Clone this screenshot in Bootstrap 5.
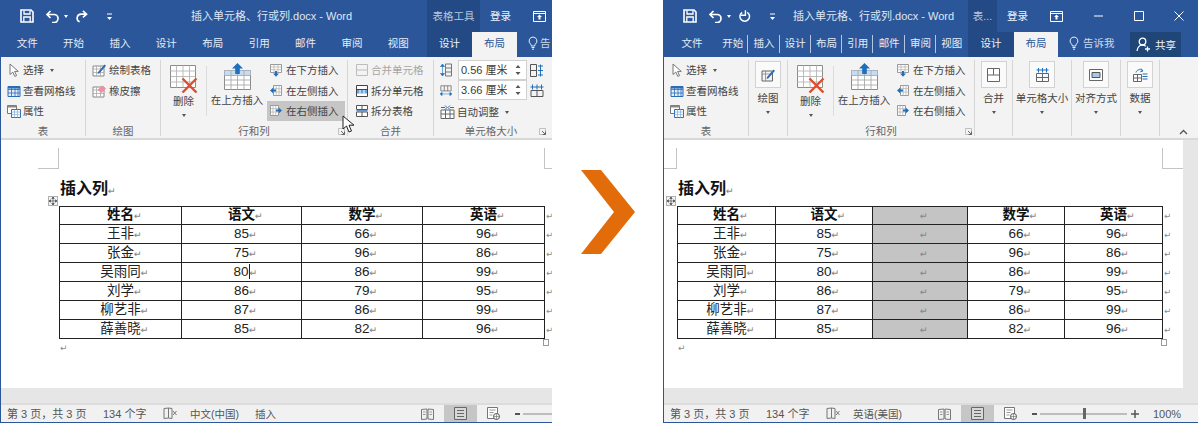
<!DOCTYPE html>
<html lang="zh-CN">
<head>
  <meta charset="UTF-8">
  <title>插入列</title>
  <meta name="viewport" content="width=device-width, initial-scale=1">
  <link href="https://cdn.jsdelivr.net/npm/bootstrap@5.3.0/dist/css/bootstrap.min.css" rel="stylesheet">
  <style>
    html, body { height: 423px; overflow: hidden; background: #fff; }
    body {
      font-family: "Liberation Sans", "Noto Sans CJK SC", sans-serif;
      font-size: 10.5px;
      line-height: 14px;
      color: #444;
    }
    svg { display: block; flex-shrink: 0; }

    /* windows */
    .wnd {
      height: 423px;
      overflow: hidden;
      flex-shrink: 0;
      display: flex;
      flex-direction: column;
      position: relative;
      border-left: 1px solid #2b579a;
      border-bottom: 1px solid #2b579a;
    }
    .wnd-a { width: 552px; }
    .wnd-b { width: 535px; }
    .arrow-gap { width: 111px; flex-shrink: 0; }

    /* title row */
    .titlebar { height: 32px; background: #2b579a; color: #dfe7f3; flex-shrink: 0; white-space: nowrap; }
    .qat { width: 117px; flex-shrink: 0; }
    .ms-qs { margin-left: 19px; }
    .ms-qu { margin-left: 11px; }
    .caret-q { width: 0; height: 0; margin-left: 4px; border: 2.5px solid transparent; border-top: 3px solid #fff; border-bottom: 0; }
    .ms-qr { margin-left: 7px; }
    .ms-qm { margin-left: 18px; }
    .doc-title { width: 165px; flex-shrink: 0; font-size: 11px; }
    .wnd-a .doc-title { margin-left: 73px; }
    .wnd-b .doc-title { margin-left: 12px; }
    .ctx-head { height: 32px; background: #234a84; color: #b9c8de; flex-shrink: 0; text-align: center; line-height: 32px; }
    .wnd-a .ctx-head { width: 53px; margin-left: 71px; }
    .wnd-b .ctx-head { width: 29px; margin-left: 10px; }
    .login { margin-left: 10px; width: 21px; color: #f2f5fa; }
    .disp-ico { margin-left: 22px; }
    .win-min { margin-left: 31px; }
    .win-max { margin-left: 31px; }
    .win-x { margin-left: 30px; }

    /* tab row */
    .tabrow { height: 25px; background: #2b579a; color: #e6ecf5; flex-shrink: 0; white-space: nowrap; padding-left: 3px; }
    .tab-item { text-align: center; line-height: 22px; height: 25px; flex-shrink: 0; }
    .wnd-a .tab-item { width: 46.4px; }
    .wnd-b .tab-item { width: 31.3px; position: relative; }
    .wnd-b .tab-item.first { width: 50px; }
    .wnd-b .tab-item.sep::after { content: ""; position: absolute; right: 0; top: 3px; height: 18px; border-right: 1px solid #b5c6df; }
    .wnd-a .tab-ctx { width: 45px; margin-left: 5.6px; }
    .wnd-b .tab-ctx { width: 46px; margin-left: .6px; }
    .tab-item.tab-ctx { background: #234a84; color: #f2f5fa; }
    .tab-item.tab-on { background: #f3f3f3; color: #2b579a; }
    .wnd-a .tab-on { width: 45px; }
    .wnd-b .tab-on { width: 44px; }
    .tell { color: #cdd9ea; gap: 2px; }
    .wnd-a .tell { margin-left: 11px; }
    .wnd-b .tell { margin-left: 11px; gap: 4px; }
    .share {
      height: 25px; width: 51px; margin-left: 16px; background: #1f4677; color: #f2f5fa;
      flex-shrink: 0;
    }

    /* ribbon */
    .rib { height: 83px; background: #f3f3f3; border-bottom: 2px solid #d8d8d8; flex-shrink: 0; }
    .grp { flex-shrink: 0; height: 76px; margin-top: 3px; border-right: 1px solid #d6d6d6; position: relative; display: flex; flex-direction: column; }
    .grp-body { flex: 1 1 auto; display: flex; min-height: 0; }
    .grp-name { height: 15px; line-height: 15px; margin-bottom: -3px; text-align: center; color: #666; flex-shrink: 0; }
    .launch { position: absolute; right: 2px; bottom: 1px; }
    .g-tbl { width: 85px; }
    .g-draw { width: 75px; }
    .g-rows { width: 187px; }
    .g-merge { width: 86px; }
    .g-size { width: 114px; border-right: 0; }
    .g-draw-s { width: 39px; }
    .g-merge-s { width: 38px; }
    .g-size-s { width: 59px; }
    .g-align-s { width: 49px; }
    .g-data-s { width: 39px; }
    .collapse-up { position: absolute; right: 10px; bottom: 3px; }

    .cmd { display: flex; align-items: center; height: 20.4px; white-space: nowrap; }
    .g-tbl .cmd { padding-left: 6px; gap: 2px; }
    .g-draw .cmd { padding-left: 6px; gap: 2px; }
    .g-merge .cmd { padding-left: 8px; gap: 3px; }
    .g-rows .cmd { width: 78px; padding-left: 3px; gap: 4px; }
    .cmd.hot { background: #c6c6c6; }
    .cmd.off { color: #a6a6a6; }
    .caret-s { width: 0; height: 0; border: 2.5px solid transparent; border-top: 3px solid #555; border-bottom: 0; display: inline-block; flex-shrink: 0; }
    .cmd .caret-s { margin-left: 4px; }

    .big { display: flex; flex-direction: column; align-items: center; flex-shrink: 0; white-space: nowrap; }
    .big .lbl { line-height: 14px; margin-top: 1px; }
    .big .caret-s { margin-top: 6px; }
    .big-del { width: 45px; padding-top: 5px; }
    .big-ins { width: 60px; padding-top: 3px; }
    .big-ins .lbl { margin-top: 3px; }
    .rule-v { width: 1px; height: 50px; margin-top: 6px; background: #dcdcdc; flex-shrink: 0; }

    .box-cmd { display: flex; flex-direction: column; align-items: center; width: 100%; white-space: nowrap; }
    .ico-box {
      width: 26px; height: 27px; margin-top: 1px; background: #fafafa; border: 1px solid #d2d2d2;
      display: flex; align-items: center; justify-content: center;
    }
    .box-cmd .lbl { margin-top: 3px; }
    .box-cmd .caret-s { margin-top: 6px; }

    .size-row { height: 20px; display: flex; align-items: center; padding-left: 6px; }
    .size-row.auto { margin-top: 2px; gap: 2px; }
    .spin {
      width: 69px; height: 20px; margin-left: 6px; margin-right: 3px; background: #fff; border: 1px solid #d0d0d0;
      padding-left: 2px; display: flex; align-items: center; justify-content: space-between; flex-shrink: 0;
      color: #3a3a3a; font-size: 11px;
    }
    .spin-arrows { margin-right: 5px; }

    /* document */
    .doc-area { flex: 1 1 auto; display: flex; min-height: 0; background: #e6e6e6; }
    .doc-view { flex: 1 1 auto; display: flex; flex-direction: column; min-width: 0; }
    .doc-paper { height: 248px; background: #fff; overflow: hidden; }
    .wnd-b .doc-paper { width: 519px; }
    .sheet { width: 485px; color: #222; }
    .wnd-a .sheet { margin-left: 58px; }
    .wnd-b .sheet { margin-left: 13px; }
    .marks { display: flex; justify-content: space-between; margin: 8px -21px 0; height: 21px; }
    .mk { width: 21px; height: 21px; border-bottom: 1px solid #c4c4c4; }
    .mk-l { border-right: 1px solid #c4c4c4; }
    .mk-r { border-left: 1px solid #c4c4c4; }
    .doc-h { font-size: 16px; font-weight: 700; line-height: 20px; margin-top: 10px; padding-left: 1px; color: #111; }
    .tbl-wrap { position: relative; margin-top: 5px; }
    .mv-handle { position: absolute; left: -11px; top: -10px; width: 10px; height: 10px; border: 1px solid #b0b0b0; background: #f4f4f4; display: flex; align-items: center; justify-content: center; }
    .end-handle { position: absolute; left: 484px; top: 133px; width: 6px; height: 7px; border: 1px solid #9a9a9a; background: #fff; }
    .table.doc-table { width: 495px; table-layout: fixed; margin: 0; border-collapse: collapse; font-size: 13.5px; line-height: 16px; }
    .table.doc-table tr { height: 19px; border-width: 0; }
    .table.doc-table tr.head { height: 18px; }
    .table.doc-table td {
      padding: 0; text-align: center; vertical-align: middle; white-space: nowrap;
      border: 1px solid #222; background: transparent; color: #222;
    }
    .table.doc-table td.row-end { border-width: 0; text-align: left; padding-left: 1px; }
    .table.doc-table td.col-sel { background: #c4c4c4; }
    .table.doc-table tr.head td { font-weight: 700; color: #111; }
    .pm { display: inline-block; width: 0; font-family: "DejaVu Sans", sans-serif; font-size: 9.5px; font-weight: 400; color: #888; vertical-align: baseline; }
    .row-end .pm { width: auto; font-size: 8.5px; }
    .text-caret { display: inline-block; width: 0; height: 15px; border-left: 1px solid #222; vertical-align: -3px; }
    .tail-pm { font-family: "DejaVu Sans", sans-serif; font-size: 9px; color: #8a8a8a; line-height: 12px; margin-top: 3px; padding-left: 1px; }
    .doc-gray { flex: 1 1 auto; }
    .side-gray { width: 15px; }

    /* status */
    .stat { height: 19px; background: #f1f1f1; border-top: 2px solid #dcdcdc; flex-shrink: 0; white-space: nowrap; color: #555; }
    .stat-left { flex-shrink: 0; }
    .wnd-a .stat-left { width: 420px; }
    .wnd-b .stat-left { width: 274px; }
    .s1 { width: 102px; padding-left: 6px; flex-shrink: 0; font-size: 11px; }
    .s2 { width: 60px; flex-shrink: 0; font-size: 11px; }
    .s3 { width: 27px; flex-shrink: 0; }
    .s4 { width: 65px; flex-shrink: 0; }
    .view-hot { width: 33px; height: 17px; margin: 0 10px 0 10px; background: #c6c6c6; display: flex; align-items: center; justify-content: center; flex-shrink: 0; }
    .zoom-minus { margin-left: 15px; width: 5px; height: 2px; background: #555; flex-shrink: 0; }
    .zoom-track { width: 87px; height: 2px; margin-left: 3px; background: #bdbdbd; position: relative; flex-shrink: 0; }
    .zoom-thumb { position: absolute; left: 43px; top: -5px; width: 3px; height: 11px; background: #666; }
    .zoom-plus { margin-left: 4px; }
    .zoom-pct { margin-left: 14px; font-size: 11px; }
    .pointer { position: absolute; left: 340px; top: 115px; }
  </style>
</head>
<body>
  <svg width="0" height="0" class="position-absolute">
    <symbol id="i-save" viewBox="0 0 14 14"><path d="M1 1h10l2 2v10H1z" fill="none" stroke="#fff" stroke-width="1.6"/><path d="M4 1.500v3.500h6V1.500M3.800 13V8h6.400v5" fill="none" stroke="#fff" stroke-width="1.300"/></symbol>
    <symbol id="i-undo" viewBox="0 0 15 14"><path d="M5.500 2 2 5.500 5.500 9M2.500 5.500H9a4 4 0 0 1 0 8H7" fill="none" stroke="#fff" stroke-width="1.700"/></symbol>
    <symbol id="i-redo" viewBox="0 0 14 14"><path d="M8.500 1.500 12.500 5l-4 3.500M12 5H6.500a4.300 4.300 0 0 0-1.500 8.300" fill="none" stroke="#fff" stroke-width="1.700"/></symbol>
    <symbol id="i-repeat" viewBox="0 0 14 14"><path d="M4.500 3a5.200 5.200 0 1 0 5.500 0" fill="none" stroke="#fff" stroke-width="1.600"/><path d="M8 .8v5.400H3" fill="none" stroke="#fff" stroke-width="1.500"/></symbol>
    <symbol id="i-qat" viewBox="0 0 7 9"><path d="M1 2h5" stroke="#fff"/><path d="M1 5h5L3.500 8z" fill="#fff"/></symbol>
    <symbol id="i-disp" viewBox="0 0 13 11"><path d="M.5.500h12v10H.5z" fill="none" stroke="#fff"/><path d="M.5 2.500h12" stroke="#fff"/><path d="M6.500 3.500 9 6H7.500v2.500h-2V6H4z" fill="#fff"/></symbol>
    <symbol id="i-bulb" viewBox="0 0 10 14"><path d="M5 1a4 4 0 0 0-2.300 7.200c.5.500.6 1 .6 1.800h3.400c0-.8.100-1.300.6-1.800A4 4 0 0 0 5 1zM3.500 11.500h3M4 13.200h2" fill="none" stroke="#e8edf5"/></symbol>
    <symbol id="i-user" viewBox="0 0 15 15"><circle cx="6.500" cy="4.500" r="3.300" fill="none" stroke="#fff" stroke-width="1.300"/><path d="M1 14c.4-3.500 2.700-6 5.500-6 1.300 0 2.300.4 3.200 1.200M11.500 9.500v5M9 12h5" fill="none" stroke="#fff" stroke-width="1.300"/></symbol>
    <symbol id="i-cursor" viewBox="0 0 12 14"><path d="M2 1v10.500l2.800-2.400 2 4.300 1.800-.8-2-4.200h3.700z" fill="#fff" stroke="#777"/></symbol>
    <symbol id="i-grid" viewBox="0 0 14 14"><path d="M1 2.500h12v10H1z" fill="#e3eef9" stroke="#2b6cb5"/><path d="M1 5.500h12M1 9h12M4.500 2.500v10M8 2.500v10M11 2.500v10" stroke="#2b6cb5" stroke-width=".8" fill="none"/><path d="M1 2.500h12v2H1z" fill="#2b6cb5"/></symbol>
    <symbol id="i-props" viewBox="0 0 14 14"><path d="M.5 1.500h9v8h-9z" fill="#fff" stroke="#777"/><path d="M.5 1.500h9v2h-9z" fill="#888"/><path d="M4.500 5.500h9v8h-9z" fill="#fff" stroke="#2b6cb5"/><path d="M4.500 8h9M4.500 10.700h9M7.500 5.500v8M10.500 5.500v8" stroke="#8fb4dc" stroke-width=".8"/></symbol>
    <symbol id="i-drawtbl" viewBox="0 0 15 14"><path d="M1 3h11v10H1z" fill="#fff" stroke="#888"/><path d="M1 6h11M1 9.500h11M4.500 3v10M8.500 3v10" stroke="#aaa" stroke-width=".8"/><path d="M6 9 12.500 1.500l1.500 1.300-6.500 7.400L5.500 11z" fill="#2b6cb5"/></symbol>
    <symbol id="i-eraser" viewBox="0 0 15 14"><path d="M1 3h11v10H1z" fill="#fff" stroke="#888"/><path d="M1 6h11M1 9.500h11M4.500 3v10M8.500 3v10" stroke="#aaa" stroke-width=".8"/><path d="M5.500 6 10 1.500l4 3L9.500 9z" fill="#ee8fa3"/></symbol>
    <symbol id="i-del" viewBox="0 0 28 28"><path d="M.5.500h25v22H.5z" fill="#fff" stroke="#8c8c8c"/><path d="M.5 6h25M.5 11.500h25M.5 17h25M6.500.5v22M13 .5v22M19.500.5v22" stroke="#b5b5b5" stroke-width=".9" fill="none"/><path d="m12.500 13.500 14 14M26.500 13.500l-14 14" stroke="#dd4f2c" stroke-width="2.400"/></symbol>
    <symbol id="i-insabove" viewBox="0 0 27 27"><path d="M.5 7.500h26v19H.5z" fill="#fff" stroke="#8c8c8c"/><path d="M.5 7.500h26v5H.5z" fill="#c7dcf0"/><path d="M.5 12.500h26M.5 17h26M.5 22h26M7 7.500v19M13.500 7.500v19M20 7.500v19" stroke="#aaa" stroke-width=".9" fill="none"/><path d="M13.500 0 19 5.500h-3.200V11h-4.600V5.500H8z" fill="#1f6fbc"/></symbol>
    <symbol id="i-insbelow" viewBox="0 0 12 13"><path d="M.5.500h11v8H.5z" fill="#fff" stroke="#999"/><path d="M.5 3h11M.5 5.700h11M4 .5v8M8 .5v8" stroke="#b5b5b5" stroke-width=".8"/><path d="M6 12.800 9 9.500H7V7H5v2.500H3z" fill="#1f6fbc"/></symbol>
    <symbol id="i-insleft" viewBox="0 0 12 13"><path d="M3.500 1.500h8v10h-8z" fill="#fff" stroke="#999"/><path d="M3.500 4.700h8M3.500 8h8M6.200 1.500v10M9 1.500v10" stroke="#b5b5b5" stroke-width=".8"/><path d="M0 6.500 3.300 3.500v2H6v2H3.300v2z" fill="#1f6fbc"/></symbol>
    <symbol id="i-insright" viewBox="0 0 12 13"><path d="M.5 1.500h8v10h-8z" fill="#fff" stroke="#999"/><path d="M.5 4.700h8M.5 8h8M3 1.500v10M5.800 1.500v10" stroke="#b5b5b5" stroke-width=".8"/><path d="M12 6.500 8.700 3.500v2H6v2h2.700v2z" fill="#1f6fbc"/></symbol>
    <symbol id="i-merge" viewBox="0 0 12 12"><path d="M.5.500h11v11H.5zM.5 6h11" fill="none" stroke="#bdbdbd"/></symbol>
    <symbol id="i-splitcell" viewBox="0 0 12 12"><path d="M.5.500h11v11H.5z" fill="#fff" stroke="#444"/><path d="M.5 4.500h11" stroke="#444"/><path d="M1 5h10v3.500H1z" fill="#6ba3d8"/><path d="M4 5v3.500M8 5v3.500" stroke="#fff"/></symbol>
    <symbol id="i-splittbl" viewBox="0 0 12 12"><path d="M.5.500h11v4H.5zM.5 7h11v4.500H.5zM6 .5v4M6 7v4.500" fill="#fff" stroke="#555"/><path d="M.5 5.800h11" stroke="#2b6cb5"/></symbol>
    <symbol id="i-rowh" viewBox="0 0 12 14"><path d="M5.500 1h6v12h-6zM5.500 5h6M5.500 9h6" fill="none" stroke="#777"/><path d="M2.500 1 4.500 3.500h-4zM2.500 13 .5 10.500h4zM2.500 3v8" fill="#1f6fbc" stroke="#1f6fbc" stroke-width=".6"/></symbol>
    <symbol id="i-colw" viewBox="0 0 14 13"><path d="M1 1h12v6H1zM5 1v6M9 1v6" fill="none" stroke="#777"/><path d="M0 10.500 2.500 8.500v4zM14 10.500l-2.500-2v4zM2 10.500h10" fill="#1f6fbc" stroke="#1f6fbc" stroke-width=".6"/></symbol>
    <symbol id="i-distr" viewBox="0 0 14 13"><path d="M.5.500h6v12h-6zM.5 6.500h6" fill="none" stroke="#555"/><path d="M10.500.5v12M8 2h5M8 6.500h5M8 11h5" fill="none" stroke="#1f6fbc"/></symbol>
    <symbol id="i-distc" viewBox="0 0 14 13"><path d="M1 6.500h12v6H1zM7 6.500v6" fill="none" stroke="#555"/><path d="M.5 3h13M2.500.5v5M7 .5v5M11.500.5v5" fill="none" stroke="#1f6fbc"/></symbol>
    <symbol id="i-auto" viewBox="0 0 15 14"><path d="M1 5h13v8.500H1zM1 9h13M5.500 5v8.500M10 5v8.500" fill="#fff" stroke="#666"/><path d="M1 2.500h4M10 2.500h4M5 .5 7 2.500 5 4.500M10 .5 8 2.500l2 2" fill="none" stroke="#1f6fbc"/></symbol>
    <symbol id="i-drawgrp" viewBox="0 0 15 14"><path d="M1 3h10.500v10H1z" fill="#f3f3f3" stroke="#666"/><path d="M1 6h10.500M4.500 3v10" stroke="#888" stroke-width=".8"/><path d="M6 9 12.500 1.500l1.500 1.300-6.500 7.400L5.500 11z" fill="#2b6cb5"/></symbol>
    <symbol id="i-mergebig" viewBox="0 0 13 14"><path d="M.5.500h12v13H.5zM.5 7h12M6.500.5V7" fill="#fff" stroke="#666"/></symbol>
    <symbol id="i-sizebig" viewBox="0 0 13 14"><path d="M.5 5.500h12v8H.5zM6.500 5.500v8M.5 9.500h12" fill="none" stroke="#666"/><path d="M.5 2h12M2.500 0v4.500M6.500 0v4.500M10.500 0v4.500" fill="none" stroke="#1f6fbc"/></symbol>
    <symbol id="i-alignbig" viewBox="0 0 14 12"><path d="M.5.500h13v11H.5z" fill="#fff" stroke="#666"/><path d="M3 3.500h8v5H3z" fill="#a9c7e6" stroke="#555"/></symbol>
    <symbol id="i-databig" viewBox="0 0 15 14"><path d="M.5 6.500h8v7h-8zM.5 10h8M4.500 6.500v7" fill="#fff" stroke="#666"/><path d="M9.500 6h5M9.500 8.500h5M9.500 11h5" stroke="#2b6cb5"/><path d="M3 4.500C3.500 2 7 .5 9.500 2.500M8 .5 10 3 7.300 3.800" fill="none" stroke="#1f6fbc"/></symbol>
    <symbol id="i-launch" viewBox="0 0 7 7"><path d="M.5 .5h6v6h-6z" fill="none" stroke="#aaa" stroke-width=".7"/><path d="M3 3l3.500 3.500M6.500 3.500v3h-3" fill="none" stroke="#666"/></symbol>
    <symbol id="i-spin" viewBox="0 0 6 12"><path d="M3 1 5.500 4h-5zM3 11 .5 8h5z" fill="#555"/></symbol>
    <symbol id="i-move" viewBox="0 0 8 8"><path d="M4 0v8M0 4h8M4 0 2.800 1.500h2.400zM4 8 2.800 6.500h2.400zM0 4l1.500-1.200v2.400zM8 4 6.500 2.800v2.400z" stroke="#555" stroke-width=".7" fill="#555"/></symbol>
    <symbol id="i-book" viewBox="0 0 13 12"><path d="M.5 1.500 6 1v10l-5.500.5zM12.500 1.500 7 1v10l5.500.5z" fill="none" stroke="#777"/><path d="M2 4h2.500M2 6.500h2.500M8.500 4H11M8.500 6.500H11" stroke="#999"/></symbol>
    <symbol id="i-print" viewBox="0 0 13 13"><path d="M.5.500h12v12H.5z" fill="#d8d8d8" stroke="#666"/><path d="M3 3.500h7M3 6.500h7M3 9.500h7" stroke="#666"/></symbol>
    <symbol id="i-web" viewBox="0 0 13 13"><path d="M.5.500h10v11H.5z" fill="#fff" stroke="#777"/><path d="M2.500 3h6M2.500 5.500h4M2.500 8h3" stroke="#999"/><circle cx="9.500" cy="9.500" r="3" fill="#fff" stroke="#555"/><path d="M6.500 9.500h6M9.500 6.500v6" stroke="#777" stroke-width=".7"/></symbol>
    <symbol id="i-proof" viewBox="0 0 14 13"><path d="M1 1.500 5.500 1v10L1 11.500zM5.500 1 9 1.500v10l-3.500-.5z" fill="none" stroke="#777"/><path d="m10 4 3.500 4M13.500 4 10 8" stroke="#777"/></symbol>
    <symbol id="i-hand" viewBox="0 0 17 19"><path d="M1 1v13l3.500-3 2.500 6 2.500-1-2.500-5.800H12z" fill="#fff" stroke="#222" transform="translate(1 0)"/></symbol>
  </svg>

  <div class="d-flex">
    <!-- left window: before inserting -->
    <section class="wnd wnd-a">
      <div class="titlebar d-flex align-items-center">
        <div class="qat position-relative d-flex align-items-center">
          <svg width="14" height="14" class="ms-qs"><use href="#i-save"/></svg>
          <svg width="15" height="14" class="ms-qu"><use href="#i-undo"/></svg>
          <span class="caret-q"></span>
          <svg width="13" height="14" class="ms-qr"><use href="#i-redo"/></svg>
          <svg width="7" height="9" class="ms-qm"><use href="#i-qat"/></svg>
        </div>
        <div class="doc-title">插入单元格、行或列.docx - Word</div>
        <div class="ctx-head">表格工具</div>
        <div class="login">登录</div>
        <svg width="13" height="11" class="disp-ico"><use href="#i-disp"/></svg>
      </div>
      <div class="tabrow d-flex">
        <div class="tab-item">文件</div><div class="tab-item">开始</div><div class="tab-item">插入</div>
        <div class="tab-item">设计</div><div class="tab-item">布局</div><div class="tab-item">引用</div>
        <div class="tab-item">邮件</div><div class="tab-item">审阅</div><div class="tab-item">视图</div>
        <div class="tab-item tab-ctx">设计</div>
        <div class="tab-item tab-on">布局</div>
        <div class="tell d-flex align-items-center align-self-start mt-1">
          <svg width="10" height="14"><use href="#i-bulb"/></svg><span>告</span>
        </div>
      </div>
      <div class="rib d-flex">
        <div class="grp g-tbl">
          <div class="grp-body flex-column">
            <div class="cmd"><svg width="14" height="14"><use href="#i-cursor"/></svg><span>选择</span><i class="caret-s"></i></div>
            <div class="cmd"><svg width="14" height="14"><use href="#i-grid"/></svg><span>查看网格线</span></div>
            <div class="cmd"><svg width="14" height="14"><use href="#i-props"/></svg><span>属性</span></div>
          </div>
          <div class="grp-name">表</div>
        </div>
        <div class="grp g-draw">
          <div class="grp-body flex-column">
            <div class="cmd"><svg width="15" height="14"><use href="#i-drawtbl"/></svg><span>绘制表格</span></div>
            <div class="cmd"><svg width="15" height="14"><use href="#i-eraser"/></svg><span>橡皮擦</span></div>
          </div>
          <div class="grp-name">绘图</div>
        </div>
        <div class="grp g-rows">
          <div class="grp-body">
            <div class="big big-del"><svg width="28" height="28"><use href="#i-del"/></svg><span class="lbl">删除</span><i class="caret-s"></i></div>
            <div class="rule-v"></div>
            <div class="big big-ins"><svg width="27" height="27"><use href="#i-insabove"/></svg><span class="lbl">在上方插入</span></div>
            <div>
              <div class="cmd"><svg width="12" height="13"><use href="#i-insbelow"/></svg><span>在下方插入</span></div>
              <div class="cmd"><svg width="12" height="13"><use href="#i-insleft"/></svg><span>在左侧插入</span></div>
              <div class="cmd hot"><svg width="12" height="13"><use href="#i-insright"/></svg><span>在右侧插入</span></div>
            </div>
          </div>
          <div class="grp-name">行和列</div>
          <svg width="7" height="7" class="launch"><use href="#i-launch"/></svg>
        </div>
        <div class="grp g-merge">
          <div class="grp-body flex-column">
            <div class="cmd off"><svg width="12" height="12"><use href="#i-merge"/></svg><span>合并单元格</span></div>
            <div class="cmd"><svg width="12" height="12"><use href="#i-splitcell"/></svg><span>拆分单元格</span></div>
            <div class="cmd"><svg width="12" height="12"><use href="#i-splittbl"/></svg><span>拆分表格</span></div>
          </div>
          <div class="grp-name">合并</div>
        </div>
        <div class="grp g-size">
          <div class="grp-body flex-column">
            <div class="size-row"><svg width="12" height="14"><use href="#i-rowh"/></svg><div class="spin"><span>0.56 厘米</span><svg width="6" height="12" class="spin-arrows"><use href="#i-spin"/></svg></div><svg width="14" height="13"><use href="#i-distr"/></svg></div>
            <div class="size-row"><svg width="12" height="13"><use href="#i-colw"/></svg><div class="spin"><span>3.66 厘米</span><svg width="6" height="12" class="spin-arrows"><use href="#i-spin"/></svg></div><svg width="14" height="13"><use href="#i-distc"/></svg></div>
            <div class="size-row auto"><svg width="15" height="14"><use href="#i-auto"/></svg><span>自动调整</span><i class="caret-s ms-1"></i></div>
          </div>
          <div class="grp-name">单元格大小</div>
          <svg width="7" height="7" class="launch"><use href="#i-launch"/></svg>
        </div>
      </div>
      <div class="doc-area">
        <div class="doc-view">
          <div class="doc-paper">
            <div class="sheet">
              <div class="marks"><div class="mk mk-l"></div><div class="mk mk-r"></div></div>
              <div class="doc-h">插入列<span class="pm">↵</span></div>
              <div class="tbl-wrap" data-table="plain"></div>
              <div class="tail-pm">↵</div>
            </div>
          </div>
          <div class="doc-gray"></div>
        </div>
      </div>
      <div class="stat d-flex align-items-center">
        <div class="stat-left d-flex align-items-center">
          <div class="s1">第 3 页，共 3 页</div>
          <div class="s2">134 个字</div>
          <div class="s3"><svg width="14" height="13"><use href="#i-proof"/></svg></div>
          <div class="s4">中文(中国)</div>
          <div>插入</div>
        </div>
        <svg width="13" height="12"><use href="#i-book"/></svg>
        <div class="view-hot"><svg width="13" height="13"><use href="#i-print"/></svg></div>
        <svg width="13" height="13"><use href="#i-web"/></svg>
        <div class="zoom-minus"></div>
        <div class="zoom-track"></div>
      </div>
      <svg width="17" height="19" class="pointer"><use href="#i-hand"/></svg>
    </section>

    <div class="arrow-gap d-flex align-items-center justify-content-center">
      <svg width="54" height="84" viewBox="0 0 54 84"><path d="M0 0h20l34 42-34 42H0l33-42z" fill="#e36c0a"/></svg>
    </div>

    <!-- right window: after inserting -->
    <section class="wnd wnd-b">
      <div class="titlebar d-flex align-items-center">
        <div class="qat position-relative d-flex align-items-center">
          <svg width="14" height="14" class="ms-qs"><use href="#i-save"/></svg>
          <svg width="15" height="14" class="ms-qu"><use href="#i-undo"/></svg>
          <span class="caret-q"></span>
          <svg width="13" height="14" class="ms-qr"><use href="#i-repeat"/></svg>
          <svg width="7" height="9" class="ms-qm"><use href="#i-qat"/></svg>
        </div>
        <div class="doc-title">插入单元格、行或列.docx - Word</div>
        <div class="ctx-head">表...</div>
        <div class="login">登录</div>
        <svg width="13" height="11" class="disp-ico"><use href="#i-disp"/></svg>
        <svg width="9" height="2" class="win-min"><path d="M0 1h9" stroke="#fff"/></svg>
        <svg width="10" height="10" class="win-max"><path d="M.5.500h9v9h-9z" fill="none" stroke="#fff"/></svg>
        <svg width="10" height="10" class="win-x"><path d="m.5.500 9 9M9.500.500l-9 9" stroke="#fff"/></svg>
      </div>
      <div class="tabrow d-flex">
        <div class="tab-item first">文件</div><div class="tab-item sep">开始</div><div class="tab-item sep">插入</div>
        <div class="tab-item sep">设计</div><div class="tab-item sep">布局</div><div class="tab-item sep">引用</div>
        <div class="tab-item sep">邮件</div><div class="tab-item sep">审阅</div><div class="tab-item">视图</div>
        <div class="tab-item tab-ctx">设计</div>
        <div class="tab-item tab-on">布局</div>
        <div class="tell d-flex align-items-center align-self-start mt-1">
          <svg width="10" height="14"><use href="#i-bulb"/></svg><span>告诉我</span>
        </div>
        <div class="share d-flex align-items-center justify-content-center gap-1">
          <svg width="15" height="15"><use href="#i-user"/></svg><span>共享</span>
        </div>
      </div>
      <div class="rib d-flex position-relative">
        <div class="grp g-tbl">
          <div class="grp-body flex-column">
            <div class="cmd"><svg width="14" height="14"><use href="#i-cursor"/></svg><span>选择</span><i class="caret-s"></i></div>
            <div class="cmd"><svg width="14" height="14"><use href="#i-grid"/></svg><span>查看网格线</span></div>
            <div class="cmd"><svg width="14" height="14"><use href="#i-props"/></svg><span>属性</span></div>
          </div>
          <div class="grp-name">表</div>
        </div>
        <div class="grp g-draw-s">
          <div class="grp-body">
            <div class="box-cmd"><div class="ico-box"><svg width="15" height="14"><use href="#i-drawgrp"/></svg></div><span class="lbl">绘图</span><i class="caret-s"></i></div>
          </div>
        </div>
        <div class="grp g-rows">
          <div class="grp-body">
            <div class="big big-del"><svg width="28" height="28"><use href="#i-del"/></svg><span class="lbl">删除</span><i class="caret-s"></i></div>
            <div class="rule-v"></div>
            <div class="big big-ins"><svg width="27" height="27"><use href="#i-insabove"/></svg><span class="lbl">在上方插入</span></div>
            <div>
              <div class="cmd"><svg width="12" height="13"><use href="#i-insbelow"/></svg><span>在下方插入</span></div>
              <div class="cmd"><svg width="12" height="13"><use href="#i-insleft"/></svg><span>在左侧插入</span></div>
              <div class="cmd"><svg width="12" height="13"><use href="#i-insright"/></svg><span>在右侧插入</span></div>
            </div>
          </div>
          <div class="grp-name">行和列</div>
          <svg width="7" height="7" class="launch"><use href="#i-launch"/></svg>
        </div>
        <div class="grp g-merge-s">
          <div class="grp-body">
            <div class="box-cmd"><div class="ico-box"><svg width="13" height="14"><use href="#i-mergebig"/></svg></div><span class="lbl">合并</span><i class="caret-s"></i></div>
          </div>
        </div>
        <div class="grp g-size-s">
          <div class="grp-body">
            <div class="box-cmd"><div class="ico-box"><svg width="13" height="14"><use href="#i-sizebig"/></svg></div><span class="lbl">单元格大小</span><i class="caret-s"></i></div>
          </div>
        </div>
        <div class="grp g-align-s">
          <div class="grp-body">
            <div class="box-cmd"><div class="ico-box"><svg width="14" height="12"><use href="#i-alignbig"/></svg></div><span class="lbl">对齐方式</span><i class="caret-s"></i></div>
          </div>
        </div>
        <div class="grp g-data-s">
          <div class="grp-body">
            <div class="box-cmd"><div class="ico-box"><svg width="15" height="14"><use href="#i-databig"/></svg></div><span class="lbl">数据</span><i class="caret-s"></i></div>
          </div>
        </div>
        <svg width="9" height="6" class="collapse-up"><path d="M1 5l3.500-3.500L8 5" fill="none" stroke="#555" stroke-width="1.300"/></svg>
      </div>
      <div class="doc-area">
        <div class="doc-view">
          <div class="doc-paper">
            <div class="sheet">
              <div class="marks"><div class="mk mk-l"></div><div class="mk mk-r"></div></div>
              <div class="doc-h">插入列<span class="pm">↵</span></div>
              <div class="tbl-wrap" data-table="inserted"></div>
              <div class="tail-pm">↵</div>
            </div>
          </div>
          <div class="doc-gray"></div>
        </div>
        <div class="side-gray"></div>
      </div>
      <div class="stat d-flex align-items-center">
        <div class="stat-left d-flex align-items-center">
          <div class="s1">第 3 页，共 3 页</div>
          <div class="s2">134 个字</div>
          <div class="s3"><svg width="14" height="13"><use href="#i-proof"/></svg></div>
          <div class="s4">英语(美国)</div>
        </div>
        <svg width="13" height="12"><use href="#i-book"/></svg>
        <div class="view-hot"><svg width="13" height="13"><use href="#i-print"/></svg></div>
        <svg width="13" height="13"><use href="#i-web"/></svg>
        <div class="zoom-minus"></div>
        <div class="zoom-track"><div class="zoom-thumb"></div></div>
        <svg width="8" height="8" class="zoom-plus"><path d="M4 0v8M0 4h8" stroke="#555" stroke-width="1.500"/></svg>
        <div class="zoom-pct">100%</div>
      </div>
    </section>
  </div>

  <script>
    const rows = [
      ['姓名', '语文', '数学', '英语'],
      ['王非', '85', '66', '96'],
      ['张金', '75', '96', '86'],
      ['吴雨同', '80', '86', '99'],
      ['刘学', '86', '79', '95'],
      ['柳艺非', '87', '86', '99'],
      ['薛善晓', '85', '82', '96']
    ];
    const mark = '<span class="pm">↵</span>';

    function cell(text, cls) {
      return `<td${cls ? ` class="${cls}"` : ''}>${text}${mark}</td>`;
    }

    function renderTable(box) {
      const inserted = box.dataset.table === 'inserted';
      const widths = inserted ? [98, 97, 95, 97, 98, 10] : [122, 120, 121, 122, 10];
      const cols = widths.map(w => `<col style="width:${w}px">`).join('');
      const body = rows.map((r, i) => {
        let tds = r.map((t, j) => {
          if (!inserted && i === 3 && j === 1) {
            return `<td>${t}<span class="text-caret"></span>${mark}</td>`;
          }
          return cell(t);
        });
        if (inserted) tds.splice(2, 0, cell('', 'col-sel'));
        return `<tr class="${i === 0 ? 'head' : ''}">${tds.join('')}<td class="row-end">${mark}</td></tr>`;
      }).join('');
      box.innerHTML = `
        <span class="mv-handle"><svg width="8" height="8"><use href="#i-move"/></svg></span>
        <table class="table table-bordered doc-table"><colgroup>${cols}</colgroup><tbody>${body}</tbody></table>
        <span class="end-handle"></span>`;
    }

    document.querySelectorAll('[data-table]').forEach(renderTable);
  </script>
</body>
</html>
